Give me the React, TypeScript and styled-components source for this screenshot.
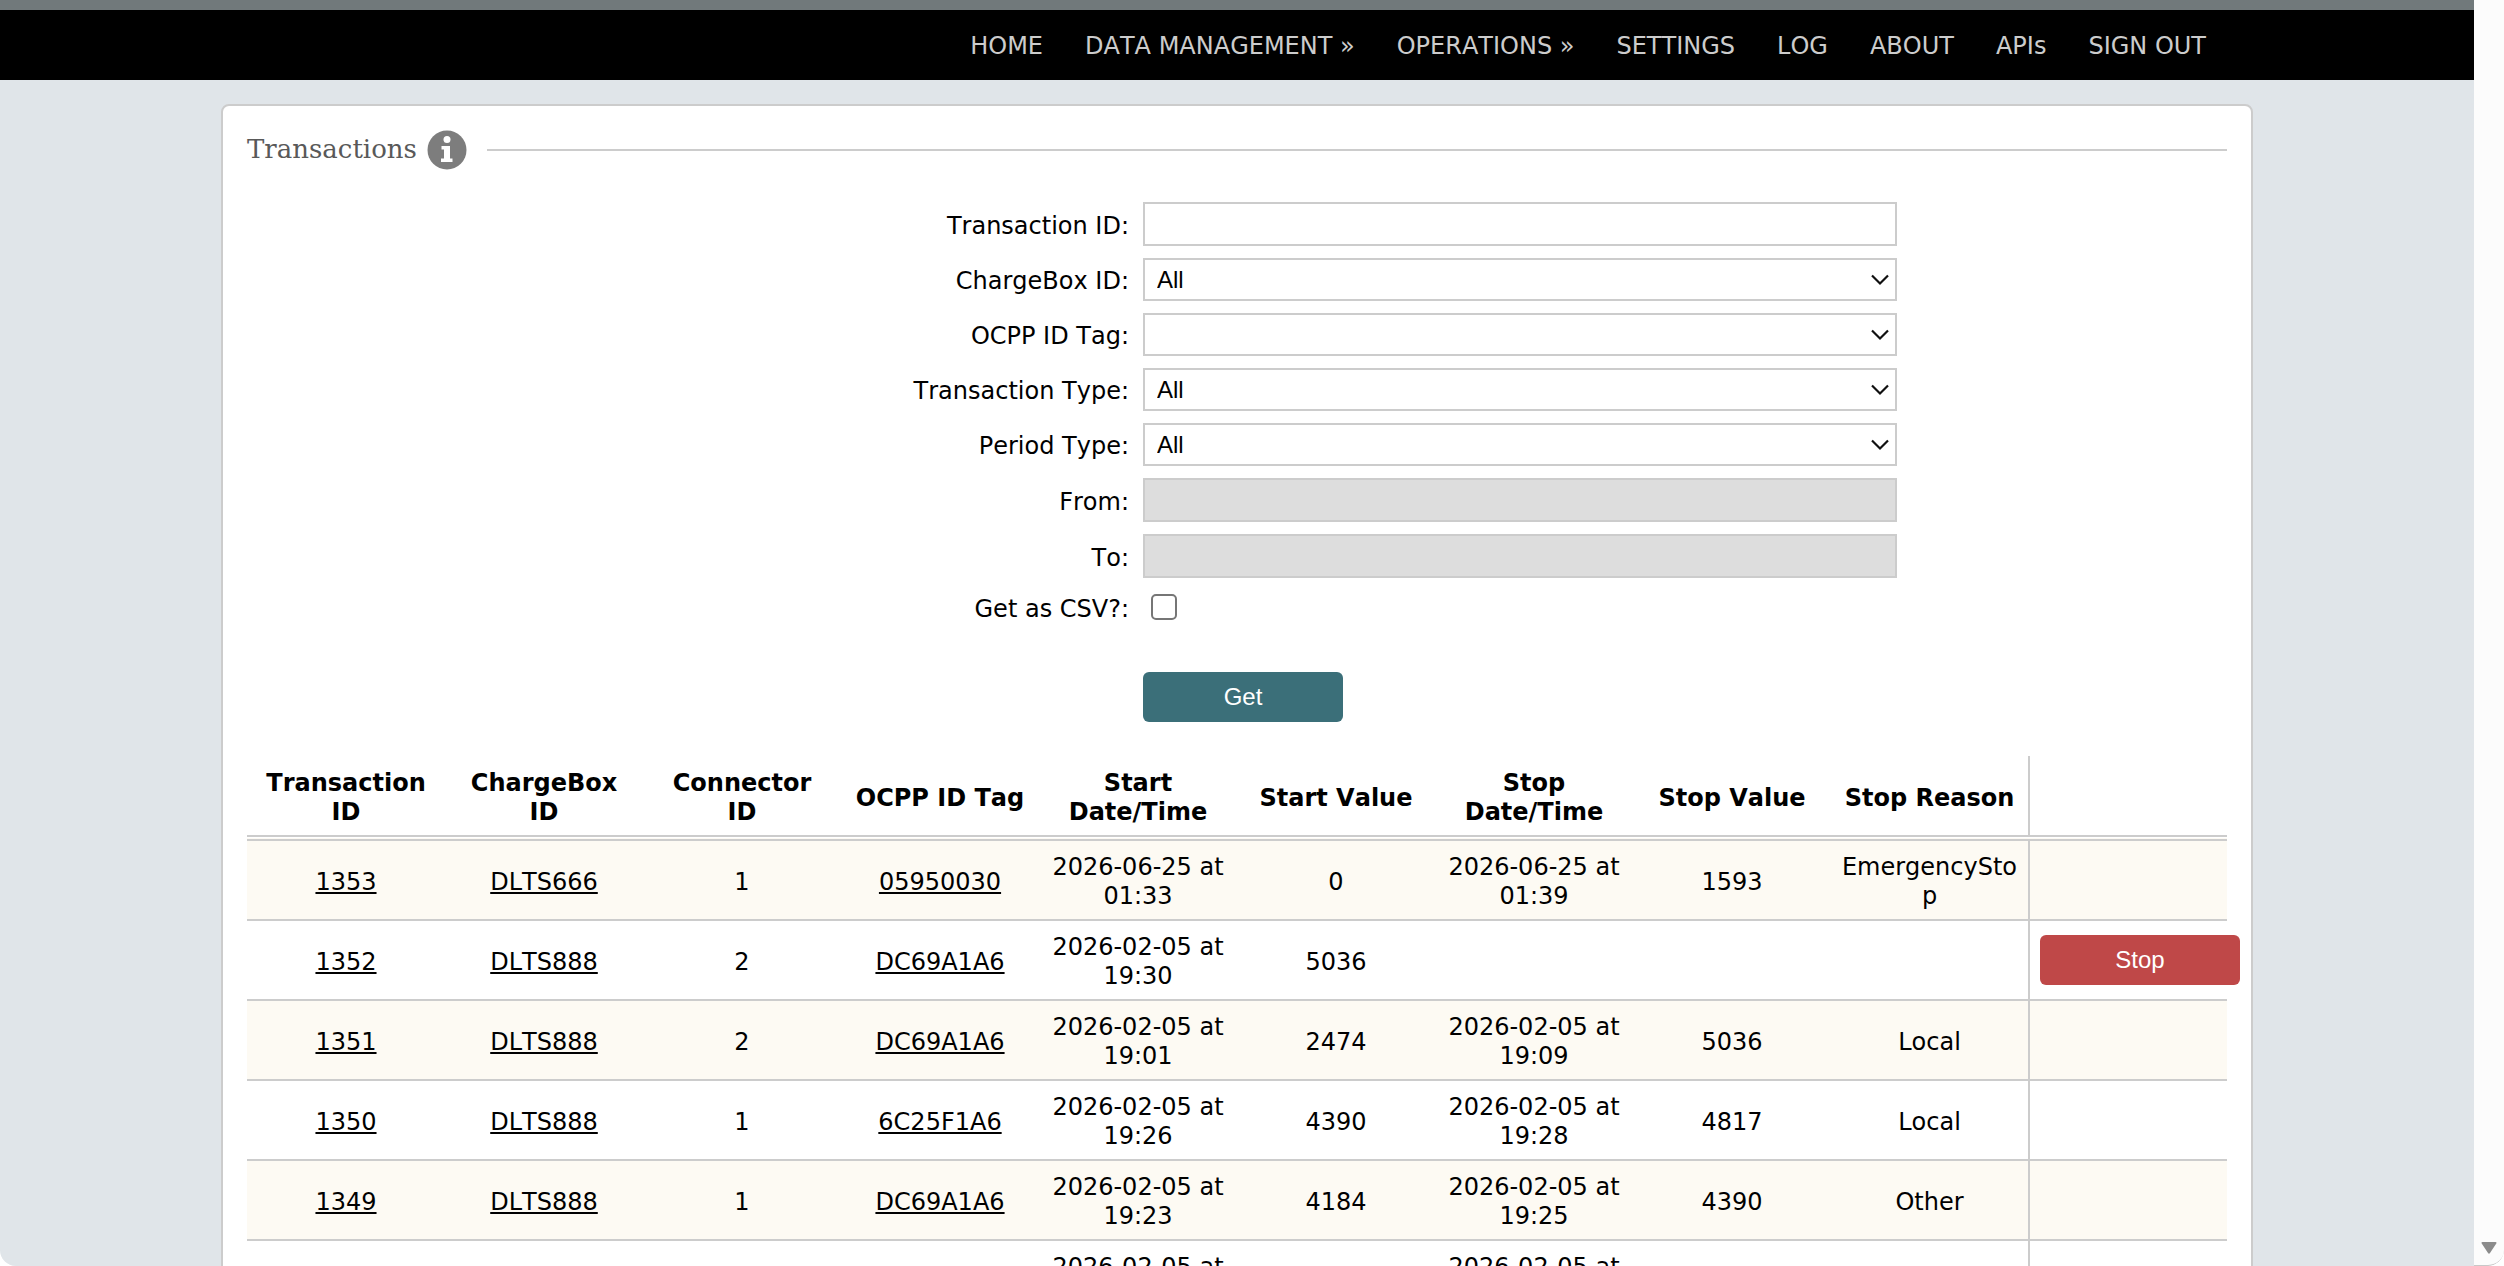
import React from "react";
import styled, { createGlobalStyle } from "styled-components";

const line = "#cccccc";
const sans = `Verdana, "DejaVu Sans", sans-serif`;
const control = `Arial, "Liberation Sans", sans-serif`;

const GlobalStyle = createGlobalStyle`
  *, *::before, *::after { box-sizing: border-box; }
  body { margin: 0; background: #ffffff; overflow: hidden; }
`;

const Frame = styled.div`
  display: flex;
  height: 100vh;
  overflow: hidden;
  background: #fcfcfc;
  border-radius: 0 0 16px 16px;
  font: 24px/29px ${sans};
  font-kerning: none;
  color: #000000;
`;

const Page = styled.div`
  flex: 1;
  min-width: 0;
  overflow: hidden;
  background: #e0e5e9;
`;

const ScrollTrack = styled.div`
  width: 30px;
  display: flex;
  flex-direction: column;
  justify-content: flex-end;
  align-items: center;
  padding-bottom: 11px;
  border-bottom: 1px solid #c8c8c8;
  border-radius: 0 0 16px 0;
`;

const TopStrip = styled.div`
  height: 10px;
  background: #71797b;
`;

const NavBar = styled.nav`
  background: #000000;
`;

const NavList = styled.ul`
  display: flex;
  justify-content: flex-end;
  width: 100%;
  max-width: 1980px;
  margin: 0 auto;
  padding: 0;
  list-style: none;
`;

const NavLink = styled.a`
  display: block;
  padding: 2px 21px 0;
  line-height: 68px;
  color: #cccccc;
  text-decoration: none;
  white-space: nowrap;
`;

const Card = styled.main`
  width: 100%;
  max-width: 2032px;
  margin: 24px auto;
  padding: 24px;
  background: #ffffff;
  border: 2px solid ${line};
  border-radius: 8px;
`;

const Heading = styled.h1`
  display: flex;
  align-items: center;
  margin: 0;
  font: 26px/40px "DejaVu Serif", serif;
  color: #595959;

  &::after {
    content: "";
    flex: 1;
    height: 2px;
    margin-left: 20px;
    background: ${line};
  }
`;

const HeadingText = styled.span`
  padding-bottom: 2px;
  line-height: 38px;
`;

const InfoIcon = styled.svg`
  width: 40px;
  height: 40px;
  margin-left: 10px;
`;

const Form = styled.form`
  display: grid;
  grid-template-columns: 554fr 754fr;
  gap: 12px;
  align-items: center;
  width: 100%;
  max-width: 1320px;
  margin: 32px auto 34px;
`;

const Label = styled.label`
  padding: 4px 2px 0 0;
  text-align: right;
`;

const TextInput = styled.input`
  width: 100%;
  height: 44px;
  padding: 0 12px;
  border: 2px solid ${line};
  border-radius: 0;
  background: #ffffff;
  font: 24px ${control};

  &:disabled { background: #dddddd; }
`;

const SelectWrap = styled.div`
  display: grid;
  align-items: center;

  & > * { grid-area: 1 / 1; }
`;

const Select = styled.select`
  appearance: none;
  width: 100%;
  height: 43px;
  padding: 0 12px;
  border: 2px solid ${line};
  border-radius: 0;
  background: #ffffff;
  color: #000000;
  font: 24px ${control};
`;

const Chevron = styled.svg`
  justify-self: end;
  width: 18px;
  height: 12px;
  margin-right: 8px;
  pointer-events: none;
`;

const Checkbox = styled.input`
  appearance: none;
  width: 26px;
  height: 26px;
  margin: 4px 8px;
  border: 2px solid #767676;
  border-radius: 5px;
  background: #ffffff;
`;

const Button = styled.button<{ $danger?: boolean }>`
  display: block;
  width: 200px;
  height: 50px;
  padding: 0;
  border: 0;
  border-radius: 6px;
  background: ${(p) => (p.$danger ? "#bf4848" : "#3b6f79")};
  color: #ffffff;
  font: 24px ${control};
`;

const SubmitRow = styled.div`
  grid-column: 2;
  padding-top: 36px;
`;

const Table = styled.table`
  width: 100%;
  table-layout: fixed;
  border-collapse: collapse;
  text-align: center;
`;

const HeadCell = styled.th`
  padding: 13px 12px 8px;
  border-bottom: 6px double ${line};

  &:last-child { border-left: 2px solid ${line}; }
`;

const Row = styled.tr`
  &:nth-child(odd) { background: #fdfaf3; }
`;

const Cell = styled.td`
  padding: 12px 10px 8px;
  border-bottom: 2px solid ${line};
  overflow-wrap: break-word;
`;

const ActionCell = styled(Cell)`
  padding: 0 10px;
  border-left: 2px solid ${line};
`;

const CellLink = styled.a`
  color: #000000;
  text-decoration: underline;
`;

const navItems = [
  "HOME",
  "DATA MANAGEMENT »",
  "OPERATIONS »",
  "SETTINGS",
  "LOG",
  "ABOUT",
  "APIs",
  "SIGN OUT",
];

type Field = { id: string; label: string; kind: "text" | "select" | "disabled"; value?: string };

const fields: Field[] = [
  { id: "transactionId", label: "Transaction ID:", kind: "text" },
  { id: "chargeBoxId", label: "ChargeBox ID:", kind: "select", value: "All" },
  { id: "ocppIdTag", label: "OCPP ID Tag:", kind: "select", value: "" },
  { id: "transactionType", label: "Transaction Type:", kind: "select", value: "All" },
  { id: "periodType", label: "Period Type:", kind: "select", value: "All" },
  { id: "from", label: "From:", kind: "disabled" },
  { id: "to", label: "To:", kind: "disabled" },
];

const columns = [
  "Transaction ID",
  "ChargeBox ID",
  "Connector ID",
  "OCPP ID Tag",
  "Start Date/Time",
  "Start Value",
  "Stop Date/Time",
  "Stop Value",
  "Stop Reason",
  "",
];

type Transaction = {
  id: string;
  box: string;
  connector: string;
  tag: string;
  start: string;
  startValue: string;
  stop: string;
  stopValue: string;
  reason: string;
  active?: boolean;
};

const transactions: Transaction[] = [
  { id: "1353", box: "DLTS666", connector: "1", tag: "05950030", start: "2026-06-25 at 01:33", startValue: "0", stop: "2026-06-25 at 01:39", stopValue: "1593", reason: "EmergencyStop" },
  { id: "1352", box: "DLTS888", connector: "2", tag: "DC69A1A6", start: "2026-02-05 at 19:30", startValue: "5036", stop: "", stopValue: "", reason: "", active: true },
  { id: "1351", box: "DLTS888", connector: "2", tag: "DC69A1A6", start: "2026-02-05 at 19:01", startValue: "2474", stop: "2026-02-05 at 19:09", stopValue: "5036", reason: "Local" },
  { id: "1350", box: "DLTS888", connector: "1", tag: "6C25F1A6", start: "2026-02-05 at 19:26", startValue: "4390", stop: "2026-02-05 at 19:28", stopValue: "4817", reason: "Local" },
  { id: "1349", box: "DLTS888", connector: "1", tag: "DC69A1A6", start: "2026-02-05 at 19:23", startValue: "4184", stop: "2026-02-05 at 19:25", stopValue: "4390", reason: "Other" },
];

function FieldRow({ field }: { field: Field }) {
  return (
    <>
      <Label htmlFor={field.id}>{field.label}</Label>
      {field.kind === "select" ? (
        <SelectWrap>
          <Select id={field.id} defaultValue={field.value}>
            <option value={field.value}>{field.value}</option>
          </Select>
          <Chevron viewBox="0 0 18 12" aria-hidden="true">
            <path d="M1 1.5 9 9.5 17 1.5" fill="none" stroke="#101010" strokeWidth="2.2" />
          </Chevron>
        </SelectWrap>
      ) : (
        <TextInput id={field.id} type="text" disabled={field.kind === "disabled"} />
      )}
    </>
  );
}

export default function App() {
  return (
    <Frame>
      <GlobalStyle />
      <Page>
        <TopStrip />
        <NavBar>
          <NavList>
            {navItems.map((item) => (
              <li key={item}>
                <NavLink href="#">{item}</NavLink>
              </li>
            ))}
          </NavList>
        </NavBar>
        <Card>
          <Heading>
            <HeadingText>Transactions</HeadingText>
            <InfoIcon viewBox="0 0 40 40" aria-hidden="true">
              <circle cx="20" cy="20" r="19.5" fill="#7d7d7d" />
              <circle cx="20" cy="9.5" r="3.5" fill="#ffffff" />
              <path d="M14.500 16h8.500v12.500h2.500v3.500h-11.500v-3.500H17v-9h-2.500z" fill="#ffffff" />
            </InfoIcon>
          </Heading>
          <Form onSubmit={(e) => e.preventDefault()}>
            {fields.map((field) => (
              <FieldRow key={field.id} field={field} />
            ))}
            <Label htmlFor="csv">Get as CSV?:</Label>
            <Checkbox id="csv" type="checkbox" />
            <SubmitRow>
              <Button type="submit">Get</Button>
            </SubmitRow>
          </Form>
          <Table>
            <thead>
              <tr>
                {columns.map((name) => (
                  <HeadCell key={name} scope="col">{name}</HeadCell>
                ))}
              </tr>
            </thead>
            <tbody>
              {transactions.map((t) => (
                <Row key={t.id}>
                  <Cell><CellLink href="#">{t.id}</CellLink></Cell>
                  <Cell><CellLink href="#">{t.box}</CellLink></Cell>
                  <Cell>{t.connector}</Cell>
                  <Cell><CellLink href="#">{t.tag}</CellLink></Cell>
                  <Cell>{t.start}</Cell>
                  <Cell>{t.startValue}</Cell>
                  <Cell>{t.stop}</Cell>
                  <Cell>{t.stopValue}</Cell>
                  <Cell>{t.reason}</Cell>
                  <ActionCell>{t.active && <Button type="button" $danger>Stop</Button>}</ActionCell>
                </Row>
              ))}
              <Row>
                <Cell colSpan={4} />
                <Cell>2026-02-05 at<br />&nbsp;</Cell>
                <Cell />
                <Cell>2026-02-05 at<br />&nbsp;</Cell>
                <Cell />
                <Cell />
                <ActionCell />
              </Row>
            </tbody>
          </Table>
        </Card>
      </Page>
      <ScrollTrack>
        <svg width="16" height="12" viewBox="0 0 16 12" aria-hidden="true">
          <path d="M1.500 0h13q1.500 0 .8 1.600L9 11q-1 1.500-2 0L.7 1.600Q0 0 1.500 0z" fill="#8b8b8b" />
        </svg>
      </ScrollTrack>
    </Frame>
  );
}
